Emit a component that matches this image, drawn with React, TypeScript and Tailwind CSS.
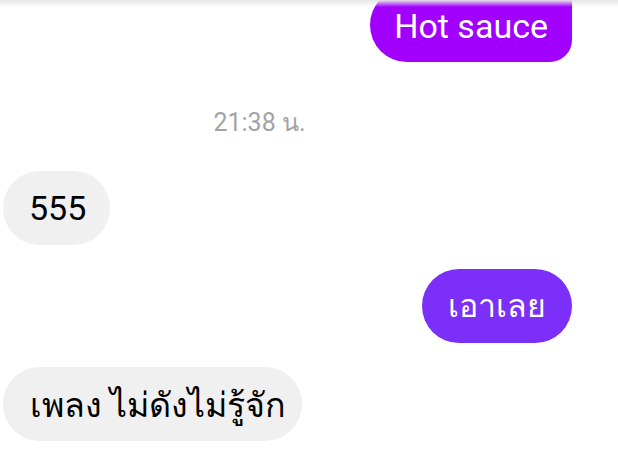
export default function App() {
  return (
    <div
      className="relative w-[618px] h-[452px] overflow-hidden bg-white"
      style={{ fontFamily: "Roboto, 'Noto Sans', sans-serif" }}
    >
      <div className="absolute left-0 top-0 w-full h-[7px] bg-gradient-to-b from-[#e6e6e6] to-white/0 z-10" />
      <div className="flex flex-col -mt-[12px] pl-[3px] pr-[46px]">
        <div className="flex justify-end">
          <div className="h-[74px] flex items-center pt-[2px] pl-[24px] pr-[24px] bg-[#a100ff] text-white text-[34px] rounded-tl-[37px] rounded-bl-[37px] rounded-tr-[6px] rounded-br-[22px]">
            Hot sauce
          </div>
        </div>
        <div className="h-[109px] flex items-center justify-center pt-[13px] pr-[56px] text-[#a3a3a3] text-[25px]">
          21:38 น.
        </div>
        <div className="flex justify-start">
          <div className="h-[74px] flex items-center pl-[26px] pr-[24px] bg-[#f0f0f0] text-black text-[34px] rounded-[37px]">
            555
          </div>
        </div>
        <div className="flex justify-end mt-[24px]">
          <div className="h-[74px] flex items-center px-[26px] bg-[#7b2ff8] text-white text-[32px] rounded-[37px]">
            เอาเลย
          </div>
        </div>
        <div className="flex justify-start mt-[24px]">
          <div className="h-[74px] flex items-center pt-[2px] pl-[27px] pr-[16px] bg-[#f0f0f0] text-black text-[34px] rounded-[37px]">
            เพลง ไม่ดังไม่รู้จัก
          </div>
        </div>
      </div>
    </div>
  );
}
